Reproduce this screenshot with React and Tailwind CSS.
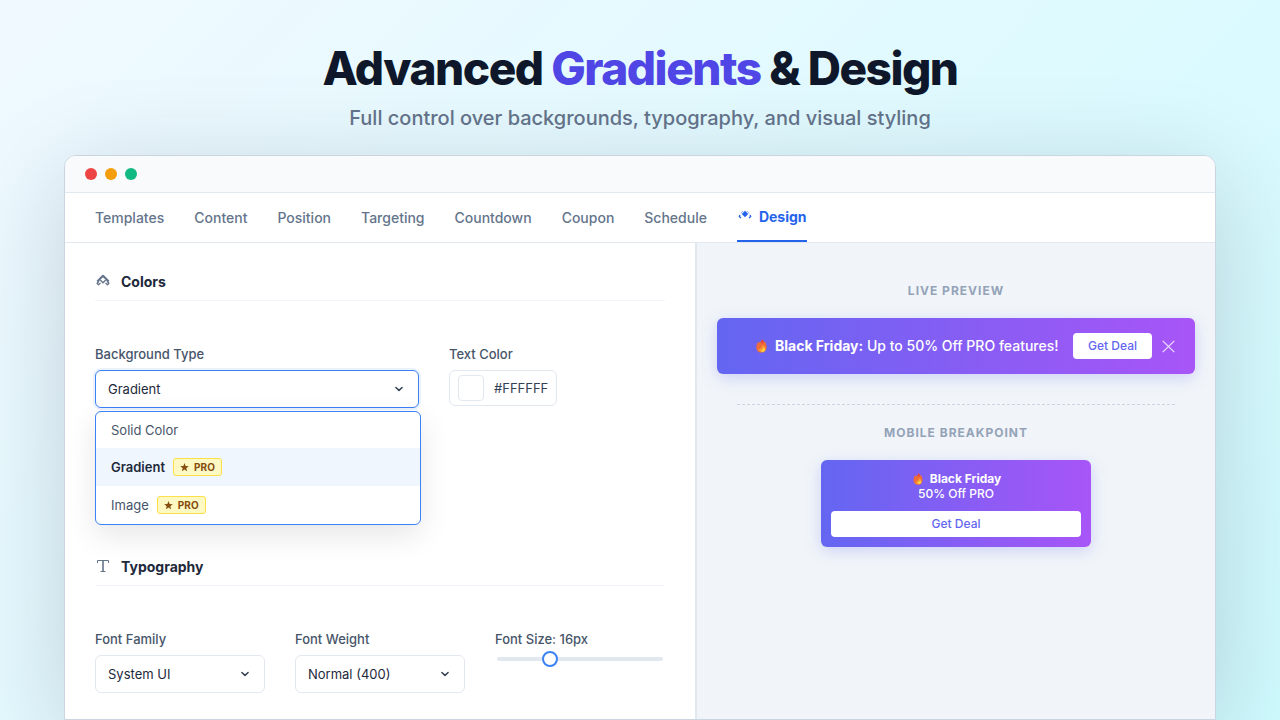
import React from "react";

const tabs = ["Templates", "Content", "Position", "Targeting", "Countdown", "Coupon", "Schedule"];

function Chevron() {
  return (
    <svg className="h-[10px] w-[10px] shrink-0" viewBox="0 0 10 10" fill="none" stroke="#334155" strokeWidth="1.5" strokeLinecap="round" strokeLinejoin="round">
      <path d="M1.900 3.500 5 6.400 8.100 3.500" />
    </svg>
  );
}

function Flame({ className }) {
  return (
    <svg className={className} viewBox="0 0 12 15">
      <path d="M6.500.4C7.800.9 8.500 2 8.400 3.200c.6.1 1-.2 1.200-.7 1.300 1.700 2 3.900 2 6.200 0 3.600-2.200 5.900-5.600 5.900S.4 12.400.4 9c0-2.200.6-4.200 1.800-5.800.3.400.8.600 1.300.5C5 3.300 6.500 2.100 6.500.4Z" fill="#ee6c3a" />
      <path d="M6.500.4C7.800.9 8.500 2 8.400 3.200 8.300 4.500 7 5 6 4.500 5.200 4 5.300 3 5.700 2.600 6.200 1.900 6.500 1.200 6.500.4Z" fill="#e5433c" />
      <path d="M7.500 6c2 1.500 3.200 3 3.100 5-.2 2.100-1.700 3.200-3.800 3.200-2.600 0-4.300-1.500-4.200-3.700.8.500 1.500.300 1.900-.3C5.400 9 7.300 8.400 7.500 6Z" fill="#fb9436" />
      <path d="M8.200 8.800c1.100.8 1.700 1.700 1.600 2.800-.2 1.500-1.300 2.200-2.500 2.100-1.200-.1-1.900-1-1.800-2.100 1 .300 2.300-.900 2.700-2.800Z" fill="#fdd33f" />
    </svg>
  );
}

function PaletteIcon() {
  return (
    <svg className="h-[14px] w-[16px]" viewBox="0 0 16 14" fill="none" stroke="#64748b">
      <path d="M2.300 8.600 8 2.800l5.700 5.800" strokeWidth="2.100" strokeLinejoin="round" />
      <path d="M5.300 7 8 9.800 10.700 7" strokeWidth="1.300" />
      <path d="M3.900 8.300 2.100 10.200l1.500 1.500L5.500 9.900M12.100 8.300l1.800 1.900-1.500 1.500-1.900-1.800" strokeWidth="1.300" strokeLinejoin="round" />
    </svg>
  );
}

function DesignIcon() {
  return (
    <svg className="h-[12px] w-[14px]" viewBox="0 0 14 12" fill="#2563eb">
      <path d="M7 1.900 10 4.900 7 7.900 4 4.900Z" stroke="#2563eb" strokeWidth=".5" strokeLinejoin="round" />
      <path d="M4.900 2.300 2.300 4.900M9.100 2.300l2.600 2.600" stroke="#2563eb" strokeWidth=".8" strokeDasharray="1 .8" />
      <path d="M1.900 6 1.300 7.600 3 9M12.100 6l.6 1.600L11 9" fill="none" stroke="#2563eb" strokeWidth="1.300" />
    </svg>
  );
}

function TypeIcon() {
  return (
    <svg className="mt-[2px] ml-px h-[14px] w-[14px]" viewBox="0 0 14 14" fill="none" stroke="#64748b">
      <path d="M1.500 4V1.500h11V4M4.500 12.500h5" strokeWidth="1" />
      <path d="M7 1.500v11" strokeWidth="1.600" />
    </svg>
  );
}

function ProBadge() {
  return (
    <span className="ml-2 flex h-[18px] w-[49px] items-center justify-center gap-[5px] rounded-[3px] border border-[#fde047] bg-[#fef9c3] text-[10px] font-bold text-[#854d0e]">
      <svg className="h-[9px] w-[9px]" viewBox="0 0 10 10" fill="#854d0e">
        <path d="m5 0 1.250 3.300 3.550.2-2.800 2.200.95 3.500L5 7.250 2.050 9.200 3 5.700.2 3.500l3.550-.2Z" />
      </svg>
      PRO
    </span>
  );
}

function SectionTitle({ icon, children }) {
  return (
    <div className="flex h-[38px] items-center border-b border-[#f1f5f9]">
      <span className="flex w-[26px] pb-[4px]">{icon}</span>
      <h2 className="text-[14px] leading-5 font-bold text-[#1e293b]">{children}</h2>
    </div>
  );
}

function Label({ children }) {
  return <div className="text-[13px] leading-4 font-medium text-[#475569]">{children}</div>;
}

function Select({ children, className }) {
  return (
    <div className={`flex h-[38px] items-center justify-between rounded-[6px] border bg-white pr-[14px] pl-3 text-[13px] text-[#1e293b] ${className}`}>
      <span className="pt-[2px]">{children}</span>
      <Chevron />
    </div>
  );
}

export default function App() {
  return (
    <div className="flex h-[720px] w-[1280px] flex-col items-center overflow-hidden bg-[linear-gradient(135deg,#f0f9ff_0%,#e0faff_50%,#cffafe_100%)] font-['Inter',sans-serif]">
      <header className="flex h-[155px] shrink-0 flex-col items-center pt-[39px]">
        <h1 className="text-[46px] leading-[58px] font-extrabold tracking-[-1.5px] whitespace-nowrap text-[#0f172a]">
          Advanced <span className="text-[#4f46e5]">Gradients</span> &amp; Design
        </h1>
        <p className="mt-[9px] text-[20px] leading-6 font-medium whitespace-nowrap text-[#64748b]">
          Full control over backgrounds, typography, and visual styling
        </p>
      </header>

      <main className="flex h-[565px] w-[1152px] shrink-0 flex-col overflow-hidden rounded-t-[12px] border border-[#cbd5e1] bg-white shadow-[0_20px_100px_rgba(15,23,42,0.18)]">
        <div className="flex h-[37px] shrink-0 items-center gap-2 border-b border-[#e2e8f0] bg-[#f8fafc] pl-5">
          <span className="h-3 w-3 rounded-full bg-[#ef4444]" />
          <span className="h-3 w-3 rounded-full bg-[#f59e0b]" />
          <span className="h-3 w-3 rounded-full bg-[#10b981]" />
        </div>

        <nav className="flex h-[50px] shrink-0 gap-[30px] border-b border-[#e2e8f0] px-[30px] text-[14px] font-medium text-[#64748b]">
          {tabs.map((tab) => (
            <span key={tab} className="flex h-[49px] items-center">{tab}</span>
          ))}
          <span className="flex h-[49px] w-[70px] items-center gap-[7px] border-b-2 border-[#2563eb] pl-[1px] font-bold text-[#2563eb]">
            <span className="shrink-0 pb-[4px]"><DesignIcon /></span>
            Design
          </span>
        </nav>

        <div className="flex min-h-0 flex-1">
          <section className="w-[630px] shrink-0 px-[30px] pt-[20px]">
            <SectionTitle icon={<PaletteIcon />}>Colors</SectionTitle>
            <div className="flex gap-[30px] pt-[45px]">
              <div className="relative w-[324px]">
                <Label>Background Type</Label>
                <Select className="mt-[8px] border-[#3b82f6] shadow-[0_0_0_2px_rgba(59,130,246,0.1)]">Gradient</Select>
                <div className="absolute top-[65px] left-0 z-10 flex h-[114px] w-[326px] flex-col rounded-[6px] border border-[#3b82f6] bg-white text-[13px] text-[#475569] shadow-[0_10px_30px_rgba(0,0,0,0.1)]">
                  <div className="flex h-[36px] items-center px-[15px]"><span className="pt-[2px]">Solid Color</span></div>
                  <div className="flex h-[38px] items-center bg-[#eff6fe] px-[15px] font-semibold text-[#1e293b]"><span className="pt-[2px]">Gradient</span><ProBadge /></div>
                  <div className="flex h-[38px] items-center px-[15px]"><span className="pt-[2px]">Image</span><ProBadge /></div>
                </div>
              </div>
              <div>
                <Label>Text Color</Label>
                <div className="mt-[8px] flex h-[36px] w-[108px] items-center gap-[10px] rounded-[6px] border border-[#e2e8f0] pl-2 text-[13px] text-[#334155]">
                  <span className="h-[26px] w-[26px] rounded-[4px] border border-[#e2e8f0] bg-white" />
                  <span className="pt-[2px]">#FFFFFF</span>
                </div>
              </div>
            </div>

            <div className="mt-[140px]">
              <SectionTitle icon={<TypeIcon />}>Typography</SectionTitle>
              <div className="grid grid-cols-3 gap-[30px] pt-[45px]">
                <div>
                  <Label>Font Family</Label>
                  <Select className="mt-[8px] border-[#e2e8f0]">System UI</Select>
                </div>
                <div>
                  <Label>Font Weight</Label>
                  <Select className="mt-[8px] border-[#e2e8f0]">Normal (400)</Select>
                </div>
                <div>
                  <Label>Font Size: 16px</Label>
                  <div className="relative mx-[2px] mt-[10px] h-1 rounded-full bg-[#e2e8f0]">
                    <span className="absolute top-[-6px] left-[45px] h-4 w-4 rounded-full border-2 border-[#3b82f6] bg-white" />
                  </div>
                </div>
              </div>
            </div>
          </section>

          <aside className="flex flex-1 flex-col border-l-2 border-[#e2e8f0] bg-[#f1f5f9] px-5 pt-[40px]">
            <div className="text-center text-[12px] leading-4 font-bold tracking-[1px] text-[#94a3b8]">LIVE PREVIEW</div>
            <div className="mt-[19px] flex h-[56px] items-center rounded-[6px] bg-[linear-gradient(90deg,#6366f1,#a855f7)] pl-[39px] text-white shadow-[0_4px_15px_rgba(99,102,241,0.25)]">
              <Flame className="h-[14px] w-[11px]" />
              <div className="ml-[8px] w-[298px] pb-[2px] text-[14px] font-medium whitespace-nowrap">
                <strong className="font-bold">Black Friday:</strong> Up to 50% Off PRO features!
              </div>
              <button className="h-[26px] w-[79px] rounded-[4px] bg-white text-[12px] font-medium text-[#6366f1]">Get Deal</button>
              <svg className="ml-[10px] h-[13px] w-[13px]" viewBox="0 0 13 13" fill="none" stroke="#fff" strokeOpacity=".8" strokeWidth="1.300">
                <path d="M.7.900 12.300 12.100M12.300.900.700 12.100" />
              </svg>
            </div>
            <svg className="mx-5 mt-[30px] h-px w-[438px] shrink-0" viewBox="0 0 438 1">
              <path d="M0 .5h438" stroke="#cbd5e1" strokeDasharray="3 2" />
            </svg>
            <div className="mt-[20px] text-center text-[12px] leading-4 font-bold tracking-[1px] text-[#94a3b8]">MOBILE BREAKPOINT</div>
            <div className="mt-[19px] flex h-[87px] w-[270px] flex-col self-center rounded-[6px] bg-[linear-gradient(90deg,#6366f1,#a855f7)] px-[10px] pt-[11px] text-center text-[12px] leading-[15px] font-medium text-white shadow-[0_4px_15px_rgba(99,102,241,0.25)]">
              <div className="flex items-center justify-center gap-[7px] pl-[2px]">
                <Flame className="h-[12px] w-[10px]" />
                <strong className="font-bold">Black Friday</strong>
              </div>
              <div>50% Off PRO</div>
              <button className="mt-[10px] h-[26px] rounded-[4px] bg-white pb-[2px] text-[12px] font-medium text-[#6366f1]">Get Deal</button>
            </div>
          </aside>
        </div>
      </main>
    </div>
  );
}
